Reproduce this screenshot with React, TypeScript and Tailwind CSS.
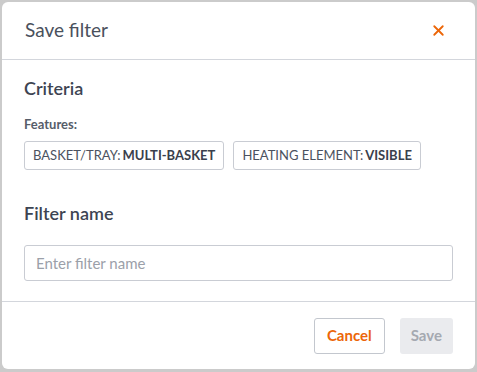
import { X } from 'lucide-react';

const features = [
    { label: 'BASKET/TRAY', value: 'MULTI-BASKET' },
    { label: 'HEATING ELEMENT', value: 'VISIBLE' },
];

export default function App() {
    return (
        <div className="w-[477px] h-[372px] bg-[#cbcbcb] p-[2px] pb-[3px] font-['Lato',sans-serif] text-[#3d4452]">
            <div className="h-full bg-white rounded-[6px] flex flex-col overflow-hidden">
                {/* Header */}
                <div className="h-[58px] flex items-center justify-between pl-[23px] pr-[28px] border-b border-[#d3d6dc] shrink-0">
                    <h2 className="text-[19px] text-[#4a505c]">Save filter</h2>
                    <button className="text-[#ec6608]">
                        <X size={17} strokeWidth={2.6} />
                    </button>
                </div>

                {/* Body */}
                <div className="flex-1 px-[22px] pt-[16px]">
                    <h3 className="text-[18px] font-semibold leading-[24px]">Criteria</h3>
                    <p className="mt-[15px] text-[13px] font-bold text-[#565d69] leading-[18px]">Features:</p>
                    <div className="mt-[8px] flex flex-wrap gap-[9px]">
                        {features.map((f) => (
                            <span
                                key={f.label}
                                className="h-[29px] px-[8px] flex items-center border border-[#c9ccd3] rounded-[3px] text-[13px] text-[#4b5260] whitespace-nowrap"
                            >
                                {f.label}:<b className="ml-[2px] font-bold text-[#3a404c]">{f.value}</b>
                            </span>
                        ))}
                    </div>

                    <h3 className="mt-[31px] text-[18px] font-semibold leading-[24px]">Filter name</h3>
                    <input
                        type="text"
                        placeholder="Enter filter name"
                        className="mt-[20px] w-full h-[36px] px-[11px] border border-[#c9ccd3] rounded-[3px] text-[15px] placeholder:text-[#9ba0a9] outline-none"
                    />
                </div>

                {/* Footer */}
                <div className="h-[68px] shrink-0 border-t border-[#d3d6dc] flex items-center justify-end gap-[15px] px-[22px]">
                    <button className="h-[36px] px-[12px] border border-[#c3c7ce] rounded-[3px] text-[15px] font-bold text-[#ec6608]">
                        Cancel
                    </button>
                    <button className="h-[36px] px-[11px] rounded-[3px] bg-[#eaebee] text-[15px] font-bold text-[#a5a9b1]">
                        Save
                    </button>
                </div>
            </div>
        </div>
    );
}
